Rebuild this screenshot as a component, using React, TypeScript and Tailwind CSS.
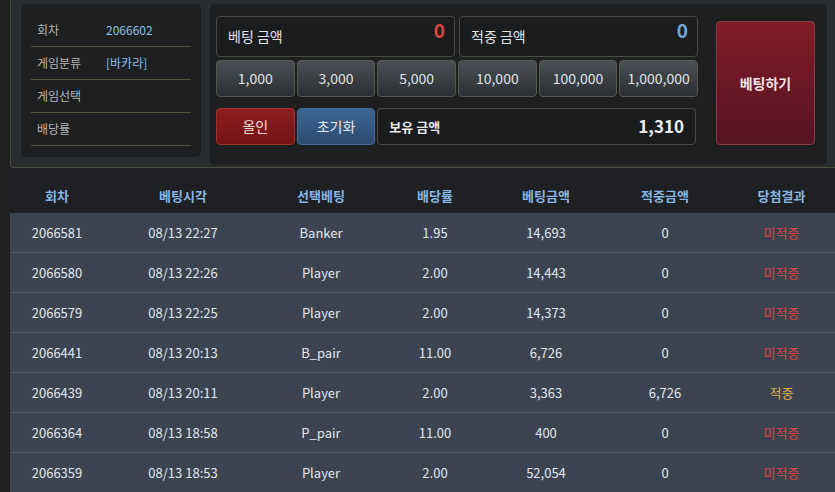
import React from "react";

const rows = [
  ["2066581", "08/13 22:27", "Banker", "1.95", "14,693", "0", "미적중"],
  ["2066580", "08/13 22:26", "Player", "2.00", "14,443", "0", "미적중"],
  ["2066579", "08/13 22:25", "Player", "2.00", "14,373", "0", "미적중"],
  ["2066441", "08/13 20:13", "B_pair", "11.00", "6,726", "0", "미적중"],
  ["2066439", "08/13 20:11", "Player", "2.00", "3,363", "6,726", "적중"],
  ["2066364", "08/13 18:58", "P_pair", "11.00", "400", "0", "미적중"],
  ["2066359", "08/13 18:53", "Player", "2.00", "52,054", "0", "미적중"],
];

const cols = [
  { name: "회차", w: "w-[94px]" },
  { name: "베팅시각", w: "w-[158px]" },
  { name: "선택베팅", w: "w-[118px]" },
  { name: "배당률", w: "w-[110px]" },
  { name: "베팅금액", w: "w-[112px]" },
  { name: "적중금액", w: "w-[126px]" },
  { name: "당첨결과", w: "w-[107px]" },
];

const font = { fontFamily: '"Noto Sans CJK KR", "Noto Sans", sans-serif' };

export default function App() {
  const chips = ["1,000", "3,000", "5,000", "10,000", "100,000", "1,000,000"];
  const info = [
    ["회차", "2066602"],
    ["게임분류", "[바카라]"],
    ["게임선택", ""],
    ["배당률", ""],
  ];
  return (
    <div className="w-[835px] h-[492px] overflow-hidden bg-[#1f2022]" style={font}>
      {/* top panel */}
      <div className="ml-[10px] w-[840px] h-[168px] bg-[#2a2d30] border-l border-b border-[#4d4c3e] rounded-bl-[4px] flex items-start pt-[4px] pl-[10px]">
        <div className="w-[180px] h-[153px] bg-[#1e1f21] rounded-[5px] pt-[10px] px-[10px]">
          {info.map(([k, v]) => (
            <div key={k} className="h-[33px] border-b border-[#55533f] flex items-center pl-[6px]">
              <span className="w-[69px] text-[12px] text-[#b4b4b4]">{k}</span>
              <span className="text-[12px] text-[#8ec0ea]">{v}</span>
            </div>
          ))}
        </div>
        <div className="ml-[9px] w-[617px] h-[161px] bg-[#1e1f21] rounded-[5px] flex pl-[6px] pt-[12px]">
          <div className="w-[482px] flex flex-col">
            <div className="flex gap-[4px] h-[41px]">
              <div className="flex-1 border border-[#4a4a42] rounded-[4px] bg-[#1b1c1e] relative flex items-center pl-[11px]">
                <span className="text-[14px] text-[#e2e2e2]">베팅 금액</span>
                <span className="absolute right-[9px] top-[-1px] text-[19px] font-bold text-[#d8463d]">0</span>
              </div>
              <div className="flex-1 border border-[#4a4a42] rounded-[4px] bg-[#1b1c1e] relative flex items-center pl-[11px]">
                <span className="text-[14px] text-[#e2e2e2]">적중 금액</span>
                <span className="absolute right-[9px] top-[-1px] text-[19px] font-bold text-[#6fa6dc]">0</span>
              </div>
            </div>
            <div className="grid grid-cols-6 gap-[2px] h-[37px] mt-[3px]">
              {chips.map((c) => (
                <div
                  key={c}
                  className="flex items-center justify-center rounded-[4px] border border-[#57574d] bg-gradient-to-b from-[#4b5056] to-[#2c3034] text-[14px] text-[#dfe3e8]"
                >
                  {c}
                </div>
              ))}
            </div>
            <div className="grid grid-cols-6 gap-[2px] h-[37px] mt-[11px]">
              <div className="flex items-center justify-center rounded-[4px] border border-[#a2322f] bg-gradient-to-b from-[#8e1d1d] to-[#741414] text-[14px] text-[#f0dada]">
                올인
              </div>
              <div className="flex items-center justify-center rounded-[4px] border border-[#466a94] bg-gradient-to-b from-[#3d6692] to-[#2c4b70] text-[14px] text-[#e0e8f2]">
                초기화
              </div>
              <div className="col-span-4 mr-[2px] border border-[#4a4a42] rounded-[4px] bg-[#1b1c1e] flex items-center justify-between pl-[11px] pr-[11px]">
                <span className="text-[13px] font-bold text-[#e8e8e8]">보유 금액</span>
                <span className="text-[17px] font-bold text-[#ececec] mt-[-2px]">1,310</span>
              </div>
            </div>
          </div>
          <div className="ml-[18px] mt-[5px] w-[99px] h-[124px] rounded-[4px] border border-[#8d3b44] bg-gradient-to-b from-[#811c27] to-[#561422] flex items-center justify-center text-[14px] font-bold text-[#f2e4e4]">
            베팅하기
          </div>
        </div>
      </div>

      {/* table */}
      <div className="ml-[10px] mt-[2px]">
        <div className="flex h-[43px] bg-[#1e2023] items-center pt-[9px]">
          {cols.map((c) => (
            <div key={c.name} className={`${c.w} text-center text-[13px] font-bold text-[#86b6e4]`}>
              {c.name}
            </div>
          ))}
        </div>
        <div className="bg-[#3b4450]">
          {rows.map((r, i) => (
            <div key={i} className="flex h-[40px] items-center border-b border-[#4a5867]">
              {r.map((cell, j) => {
                let color = "text-[#e2e7ee]";
                if (j === 6) color = cell === "적중" ? "text-[#e3b04a]" : "text-[#dc453d]";
                return (
                  <div key={j} className={`${cols[j].w} text-center text-[13px] ${color}`}>
                    {cell}
                  </div>
                );
              })}
            </div>
          ))}
        </div>
      </div>
    </div>
  );
}
